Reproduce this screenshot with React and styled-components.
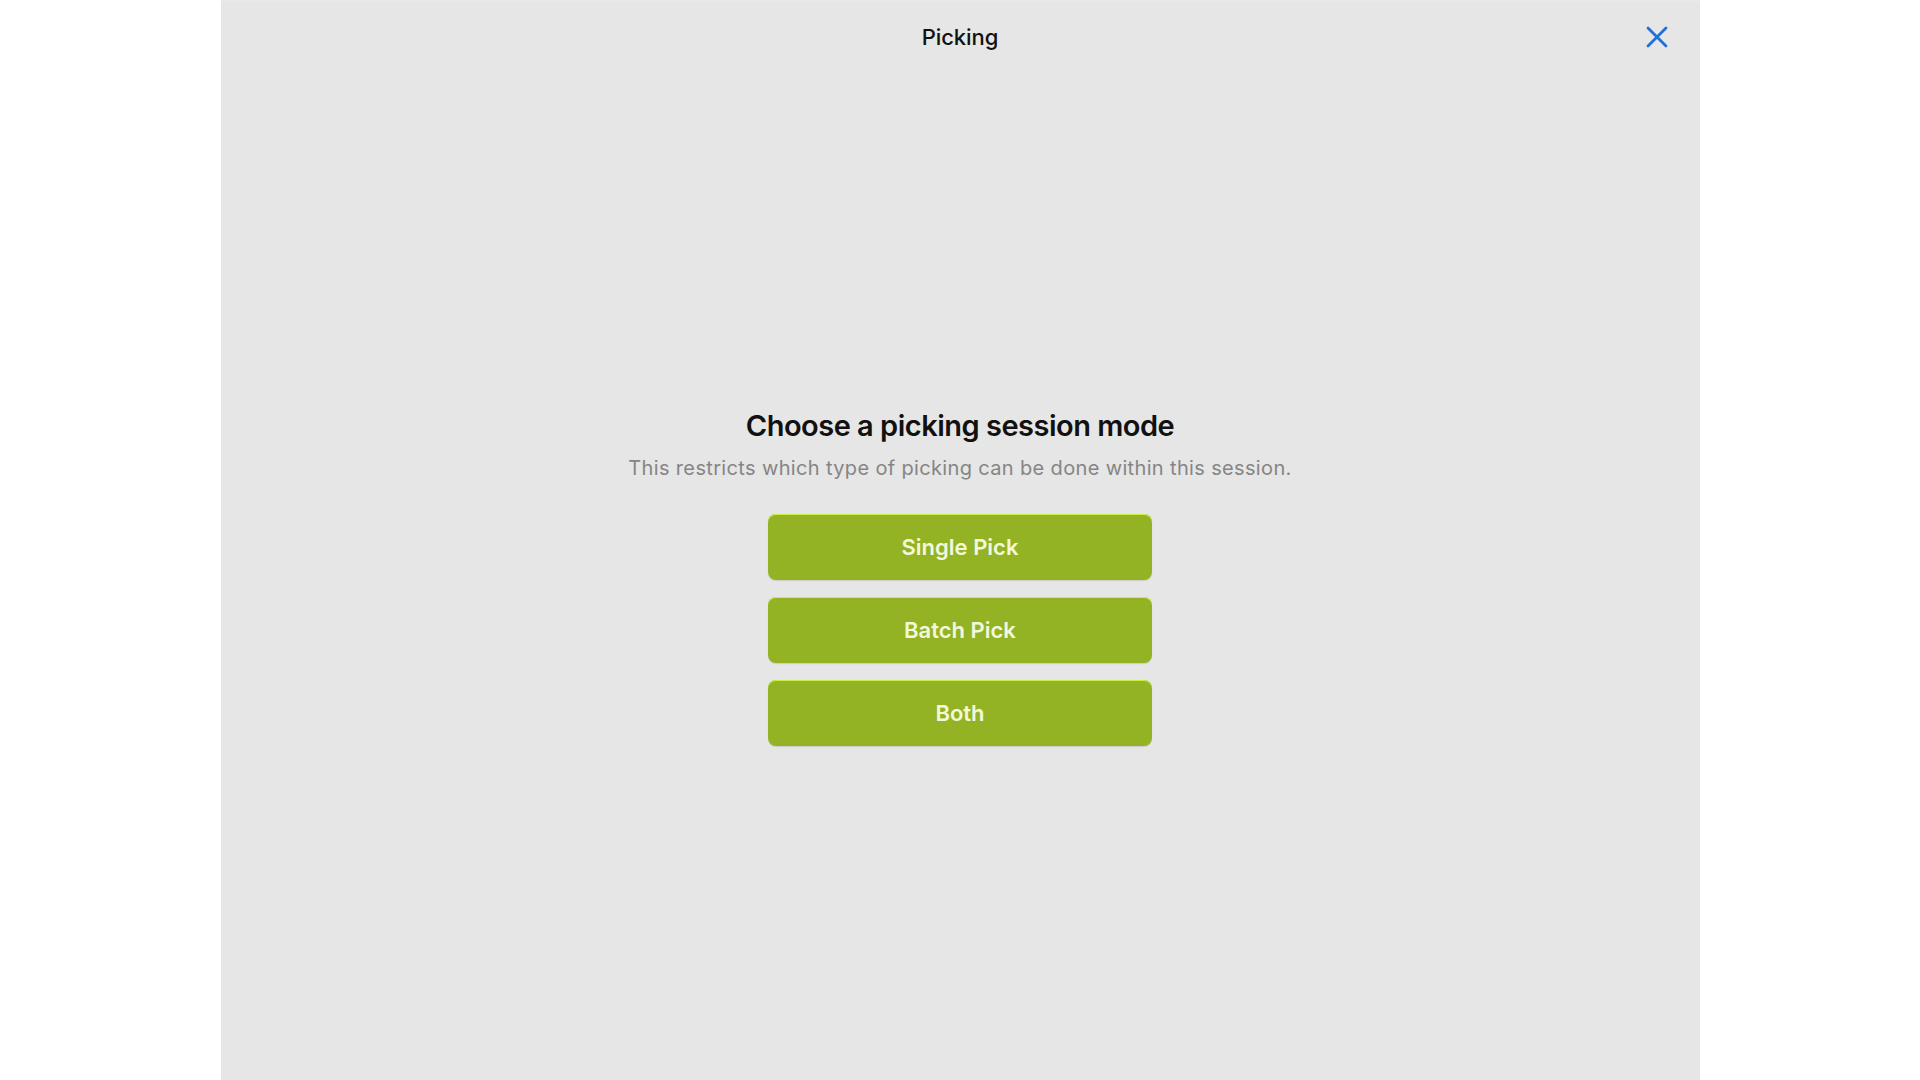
import React from "react";
import styled, { createGlobalStyle } from "styled-components";

const Global = createGlobalStyle`
  html, body { margin: 0; padding: 0; background: #ffffff; }
  body { font-family: Inter, "Noto Sans", "Liberation Sans", sans-serif; }
  * { box-sizing: border-box; }
`;

const Page = styled.div`
  display: flex;
  justify-content: center;
  width: 100%;
  height: 1080px;
  background: #ffffff;
`;

const Panel = styled.div`
  width: 1479px;
  height: 1080px;
  background: #e6e6e6;
  border-top: 2px solid #e9e9e9;
  display: flex;
  flex-direction: column;
`;

const Header = styled.header`
  height: 70px;
  display: grid;
  grid-template-columns: 1fr auto 1fr;
  align-items: center;
  padding: 0 28px;
`;

const Title = styled.h1`
  grid-column: 2;
  margin: 0;
  font-size: 22px;
  font-weight: 500;
  color: #111111;
  letter-spacing: -0.1px;
`;

const CloseButton = styled.button`
  grid-column: 3;
  justify-self: end;
  width: 30px;
  height: 30px;
  padding: 0;
  border: none;
  background: transparent;
  display: flex;
  align-items: center;
  justify-content: center;
  cursor: pointer;
`;

const Body = styled.main`
  display: flex;
  flex-direction: column;
  align-items: center;
  padding-top: 336px;
`;

const Heading = styled.h2`
  margin: 0;
  font-size: 29px;
  line-height: 35px;
  font-weight: 600;
  color: #111111;
  letter-spacing: -0.5px;
`;

const Subtitle = styled.p`
  margin: 13px 0 0;
  font-size: 20px;
  line-height: 24px;
  font-weight: 400;
  color: #858585;
  letter-spacing: 0.35px;
`;

const Options = styled.div`
  margin-top: 34px;
  display: flex;
  flex-direction: column;
  gap: 17px;
`;

const Option = styled.button`
  width: 384px;
  height: 66px;
  border: none;
  border-radius: 8px;
  background: #94b324;
  box-shadow: inset 0 1px 0 #c9ef4a, 0 1px 1px rgba(0, 0, 0, 0.12);
  color: #f2f8dc;
  font-family: Inter, "Noto Sans", "Liberation Sans", sans-serif;
  font-size: 22px;
  font-weight: 600;
  cursor: pointer;
`;

export default function App() {
  return (
    <>
      <Global />
      <Page>
        <Panel>
          <Header>
            <Title>Picking</Title>
            <CloseButton aria-label="Close">
              <svg width="24" height="24" viewBox="0 0 24 24">
                <path
                  d="M3 3 L21 21 M21 3 L3 21"
                  stroke="#1f70d8"
                  strokeWidth="2.8"
                  strokeLinecap="round"
                  fill="none"
                />
              </svg>
            </CloseButton>
          </Header>
          <Body>
            <Heading>Choose a picking session mode</Heading>
            <Subtitle>This restricts which type of picking can be done within this session.</Subtitle>
            <Options>
              <Option>Single Pick</Option>
              <Option>Batch Pick</Option>
              <Option>Both</Option>
            </Options>
          </Body>
        </Panel>
      </Page>
    </>
  );
}
